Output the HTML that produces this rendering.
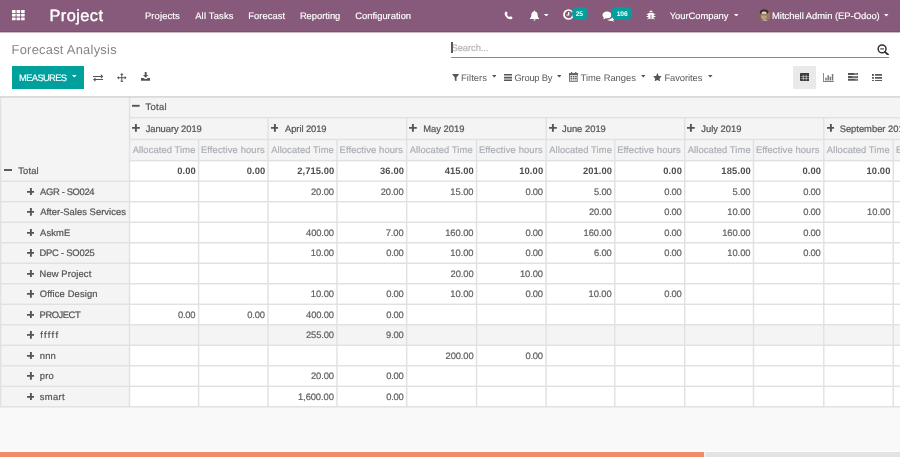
<!DOCTYPE html>
<html lang="en">
<head>
<meta charset="utf-8">
<title>Forecast Analysis - Odoo</title>
<style>
*{box-sizing:border-box;margin:0;padding:0}
html,body{width:900px;height:457px;overflow:hidden;background:#f9f9f9;font-family:"Liberation Sans",Arial,sans-serif;color:#666}
body{position:relative}
#app{left:0;top:0;width:900px;height:457px;will-change:transform;overflow:hidden}
div,svg{position:absolute}
.t,.brand,.bt,.title,.ph,.btxt,.f,.c,.n,.nb,.m{text-rendering:geometricPrecision}
.t{height:14px;line-height:14px;font-size:9.4px;white-space:nowrap;color:#fff;-webkit-text-stroke:.15px #fff}
.brand{height:22px;line-height:22px;font-size:16.4px;white-space:nowrap;color:#fff;-webkit-text-stroke:.4px #fff}
.w{fill:#fff}
.badge{height:12.2px;border-radius:6.1px;background:#00a09d}
.bt{height:12px;line-height:12px;color:#fff;font-size:6.7px;font-weight:bold;white-space:nowrap}
.cp{left:0;top:32px;width:900px;height:65px;background:#fff}
.title{height:18px;line-height:18px;font-size:12.9px;color:#858585;white-space:nowrap}
.sline{left:451px;top:56.9px;width:438px;height:1px;background:#8a8a8a}
.ph{height:14px;line-height:14px;font-size:9.4px;color:#b4b4b4;white-space:nowrap;-webkit-text-stroke:.2px #b4b4b4}
.cursor{left:451.2px;top:42px;width:1.6px;height:11.2px;background:#5a5a5a}
.btn{left:12px;top:66px;width:72px;height:23px;background:#00a09d}
.btxt{height:14px;line-height:14px;color:#fff;font-size:9.4px;white-space:nowrap;-webkit-text-stroke:.15px #fff}
.ic{fill:#555}
.ic2{fill:#333}
.f{height:14px;line-height:14px;font-size:9.4px;color:#5a5a5a;white-space:nowrap}
.vs{left:792.7px;top:65.9px;width:23.3px;height:23px;background:#e9e9e9}
.tbl{left:0;top:97px;width:900px;height:310.2px;background:#fff;overflow:hidden}
.hd{background:#f4f4f4}
.lines{fill:#dfe2e5}
.c{font-size:9.4px;line-height:14px;height:14px;white-space:nowrap;color:#555;-webkit-text-stroke:.22px #555}
.n{font-size:9.4px;line-height:14px;height:14px;white-space:nowrap;color:#606060;-webkit-text-stroke:.2px #606060}
.nb{font-size:9.4px;line-height:14px;height:14px;white-space:nowrap;color:#4f4f4f;font-weight:bold}
.m{font-size:9.4px;line-height:14px;height:14px;white-space:nowrap;color:#abafb5;-webkit-text-stroke:.2px #abafb5}
.pm{fill:#555}
.bar{left:0;top:452px;width:900px;height:5px;background:#e3e3e3}
.bar i{position:absolute;left:0;top:0;width:704px;height:5px;background:#f08b65}
.bar b{position:absolute;left:704px;top:0;width:1.5px;height:5px;background:#f3ece9}
.barl{left:0;top:451px;width:900px;height:1px;background:#fdfdfd}
</style>
</head>
<body>
<div id="app">

<div class="cp"></div>
<svg class="navbg" style="left:0;top:0;width:900px;height:34px" viewBox="0 0 900 34"><rect x="0" y="0" width="900" height="32.400" fill="#74506a"/><rect x="0" y="0" width="900" height="31.300" fill="#875a7b"/></svg>
<svg class="w" style="left:11.9px;top:9.9px;width:13px;height:11px" viewBox="0 0 13 11"><rect x="0.00" y="0.00" width="3.6" height="2.9" rx=".5"/><rect x="4.55" y="0.00" width="3.6" height="2.9" rx=".5"/><rect x="9.10" y="0.00" width="3.6" height="2.9" rx=".5"/><rect x="0.00" y="3.70" width="3.6" height="2.9" rx=".5"/><rect x="4.55" y="3.70" width="3.6" height="2.9" rx=".5"/><rect x="9.10" y="3.70" width="3.6" height="2.9" rx=".5"/><rect x="0.00" y="7.40" width="3.6" height="2.9" rx=".5"/><rect x="4.55" y="7.40" width="3.6" height="2.9" rx=".5"/><rect x="9.10" y="7.40" width="3.6" height="2.9" rx=".5"/></svg>
<div id="brand" class="brand" style="left:49.52px;top:5.00px;letter-spacing:0.408px;">Project</div>
<div id="nav0" class="t" style="left:144.91px;top:9.00px;letter-spacing:0.137px;">Projects</div>
<div id="nav1" class="t" style="left:195.16px;top:9.00px;letter-spacing:0.196px;">All Tasks</div>
<div id="nav2" class="t" style="left:248.26px;top:9.00px;letter-spacing:0.050px;">Forecast</div>
<div id="nav3" class="t" style="left:299.89px;top:9.00px;letter-spacing:-0.030px;">Reporting</div>
<div id="nav4" class="t" style="left:355.30px;top:9.00px;letter-spacing:0.000px;">Configuration</div>
<svg class="w" style="left:504px;top:11px;width:9px;height:9px" viewBox="0 0 20 20"><path d="M4.5 1.200c.5-.3 1.100-.2 1.400.3l2.100 3.400c.3.500.2 1.100-.2 1.500L6.400 7.600c1.100 2.400 3.200 4.500 5.900 5.900l1.300-1.400c.4-.4 1-.5 1.500-.2l3.400 2.100c.5.300.6.900.3 1.400-.8 1.600-2.300 3.100-4.100 3.100C8.600 18.500 1.500 11.400 1.500 5.300c0-1.800 1.400-3.300 3-4.100z"/></svg>
<svg class="w" style="left:529px;top:10.2px;width:11px;height:11px" viewBox="0 0 20 20"><path d="M10 1c.7 0 1.200.5 1.200 1.200v.5c2.700.6 4.500 2.900 4.500 5.800 0 3.500 1.100 5.400 2.600 6.600.5.400.2 1.400-.5 1.400H2.200c-.7 0-1-1-.5-1.400 1.500-1.200 2.600-3.100 2.600-6.600 0-2.900 1.800-5.200 4.500-5.800v-.5C8.800 1.500 9.300 1 10 1zM7.800 17.400h4.400c0 1.200-1 2.100-2.200 2.100s-2.200-.9-2.200-2.100z"/></svg>
<svg class="w" style="left:544.40px;top:13.90px;width:4.6px;height:2.6px" viewBox="0 0 4.6 2.6"><path d="M0 0h4.6L2.3 2.6z"/></svg>
<svg style="left:562.600px;top:9.300px;width:11px;height:11px" viewBox="0 0 11 11"><circle cx="5.500" cy="5.500" r="4.500" fill="none" stroke="#fff" stroke-width="1.700"/><path d="M5.700 2.900v3.100H3.500" fill="none" stroke="#fff" stroke-width="1.200"/></svg>
<div class="badge" style="left:572.3px;top:7.4px;width:16.2px"></div>
<div id="b25" class="bt" style="left:575.66px;top:9.00px;letter-spacing:-0.006px;">25</div>
<svg class="w" style="left:602px;top:10.5px;width:13px;height:11px" viewBox="0 0 26 22"><path d="M10 1c5 0 9 3 9 6.800s-4 6.800-9 6.800c-.9 0-1.800-.1-2.600-.3C6 15.500 4 16.300 2 16.500c.9-1 1.600-2 1.900-3.200C2.100 12 1 10 1 7.800 1 4 5 1 10 1zm11.500 8c2.100 1.200 3.500 3 3.500 5 0 1.800-1 3.400-2.700 4.500.3 1.100.9 2 1.700 2.900-1.800-.2-3.500-.9-4.800-1.800-.7.100-1.500.2-2.200.2-2.600 0-4.900-.9-6.400-2.300 5.900-.2 10.900-3.500 10.900-8.500z"/></svg>
<div class="badge" style="left:611.3px;top:7.4px;width:20.8px"></div>
<div id="b106" class="bt" style="left:616.64px;top:9.00px;letter-spacing:-0.072px;">106</div>
<svg class="w" style="left:646px;top:10.3px;width:10px;height:10px" viewBox="0 0 20 20"><path d="M6.500 4.500a3.500 3.500 0 0 1 7 0zM5.500 6h9c.6 0 1 .4 1 1v1.500l2.300-1.300.9 1.500-3.200 1.800v1.500h3.300v1.800h-3.300c0 .7-.2 1.400-.5 2l2.800 2-1.100 1.400-2.700-2c-.8.800-1.900 1.300-3.100 1.300V9.500H9.100v9c-1.200 0-2.300-.5-3.100-1.300l-2.700 2-1.100-1.400 2.800-2c-.3-.6-.5-1.300-.5-2H1.200V12h3.300v-1.500L1.300 8.700l.9-1.500 2.300 1.300V7c0-.6.400-1 1-1z"/></svg>
<div id="company" class="t" style="left:669.66px;top:9.00px;letter-spacing:-0.022px;">YourCompany</div>
<svg class="w" style="left:733.90px;top:13.90px;width:4.6px;height:2.6px" viewBox="0 0 4.6 2.6"><path d="M0 0h4.6L2.3 2.6z"/></svg>
<svg style="left:757.6px;top:8.7px;width:12.600px;height:12.600px" viewBox="0 0 13 13"><defs><clipPath id="av"><circle cx="6.5" cy="6.5" r="6.300"/></clipPath><filter id="avb" x="-20%" y="-20%" width="140%" height="140%"><feGaussianBlur stdDeviation=".55"/></filter></defs><g clip-path="url(#av)"><g filter="url(#avb)"><rect x="-3" y="-3" width="19" height="19" fill="#94805a"/><rect x="-3" y="-3" width="7" height="19" fill="#7d6c50"/><ellipse cx="6.3" cy="2.6" rx="4.6" ry="3" fill="#3d2f2c"/><ellipse cx="6.3" cy="4.3" rx="2.7" ry="1.6" fill="#e4dcd6"/><ellipse cx="6" cy="7.6" rx="2.900" ry="3.200" fill="#c99883"/><rect x="3.6" y="5.600" width="5.400" height="1" fill="#6b5148" opacity=".7"/><path d="M6.500 10.500l3 1 1.500 2h-6z" fill="#aab0bd"/></g></g></svg>
<div id="user" class="t" style="left:772.03px;top:9.00px;letter-spacing:-0.006px;">Mitchell Admin (EP-Odoo)</div>
<svg class="w" style="left:884.40px;top:14.00px;width:4.6px;height:2.6px" viewBox="0 0 4.6 2.6"><path d="M0 0h4.6L2.3 2.6z"/></svg>
<div id="title" class="title" style="left:11.54px;top:41.00px;letter-spacing:0.253px;">Forecast Analysis</div>
<div class="sline"></div>
<div id="ph" class="ph" style="left:451.56px;top:41.00px;letter-spacing:-0.071px;">Search...</div>
<div class="cursor"></div>
<svg style="left:877.4px;top:43.9px;width:12px;height:11.5px" viewBox="0 0 12 11.500"><circle cx="5.100" cy="4.900" r="3.900" fill="none" stroke="#333" stroke-width="1.500"/><path d="M7.900 7.900l3.200 2.900" stroke="#333" stroke-width="1.900" stroke-linecap="round"/><path d="M3.200 4.900h3.800" stroke="#333" stroke-width="1.100"/></svg>
<div class="btn"></div>
<div id="measures" class="btxt" style="left:19.06px;top:71.00px;letter-spacing:-0.659px;">MEASURES</div>
<svg class="w" style="left:72.10px;top:75.20px;width:4.6px;height:2.6px" viewBox="0 0 4.6 2.6"><path d="M0 0h4.6L2.3 2.6z"/></svg>
<svg class="ic" style="left:92.9px;top:73.600px;width:10.400px;height:8px" viewBox="0 0 10.400 8"><path d="M0 1.900h7.900V.3l2.500 2.100-2.500 2.100V3H0zM10.400 5h-7.900V3.500L0 5.600l2.500 2.100V6.100h7.900z"/></svg>
<svg class="ic" style="left:117.1px;top:72.600px;width:9.600px;height:9.600px" viewBox="0 0 9.600 9.600"><path d="M4.800 0l1.700 1.900H5.300v2.400h2.400V3.100l1.900 1.700-1.900 1.700V5.300H5.300v2.400h1.200L4.800 9.600 3.100 7.700h1.200V5.300H1.900v1.200L0 4.800l1.900-1.700v1.200h2.400V1.900H3.100z"/></svg>
<svg class="ic" style="left:140.700px;top:72.400px;width:9.300px;height:8.800px" viewBox="0 0 9.300 8.800"><path d="M3.700 0h1.900v3h1.700L4.650 5.800 2 3h1.700zM0 5.900h2.600l1.300 1.200h1.500l1.300-1.200h2.600v2.900H0z"/></svg>
<svg class="ic" style="left:451.700px;top:73.800px;width:7.300px;height:7.600px" viewBox="0 0 7.300 7.600"><path d="M0 0h7.300L4.500 3.400v4.200L2.800 6.300V3.400z"/></svg>
<div id="f0" class="f" style="left:461.10px;top:71.00px;letter-spacing:0.047px;">Filters</div>
<svg class="ic" style="left:491.60px;top:75.00px;width:4.6px;height:2.6px" viewBox="0 0 4.6 2.6"><path d="M0 0h4.6L2.3 2.6z"/></svg>
<svg class="ic" style="left:504px;top:73.800px;width:8.400px;height:7.200px" viewBox="0 0 8.400 7.200"><path d="M0 0h8.400v1.600H0zM0 2.800h8.400v1.600H0zM0 5.600h8.400v1.600H0z"/></svg>
<div id="f1" class="f" style="left:514.56px;top:71.00px;letter-spacing:-0.254px;">Group By</div>
<svg class="ic" style="left:556.90px;top:75.00px;width:4.6px;height:2.6px" viewBox="0 0 4.6 2.6"><path d="M0 0h4.6L2.3 2.6z"/></svg>
<svg class="ic" style="left:569px;top:72.400px;width:9.300px;height:9.800px" viewBox="0 0 9.300 9.800"><path fill-rule="evenodd" d="M1.900 0h1.300v1.100h2.900V0h1.300v1.100h1.900v8.700H0V1.100h1.900zM.9 3.300v5.600h7.500V3.300zM1.500 3.900h1.700v1.300H1.500zM3.800 3.900h1.700v1.300H3.800zM6.100 3.900h1.700v1.300H6.100zM1.500 5.700h1.700V7H1.500zM3.800 5.700h1.700V7H3.800zM6.100 5.700h1.700V7H6.100zM1.500 7.400h1.700v1H1.500zM3.800 7.400h1.700v1H3.800zM6.100 7.400h1.700v1H6.100z" opacity=".9"/></svg>
<div id="f2" class="f" style="left:580.54px;top:71.00px;letter-spacing:0.002px;">Time Ranges</div>
<svg class="ic" style="left:640.60px;top:75.00px;width:4.6px;height:2.6px" viewBox="0 0 4.6 2.6"><path d="M0 0h4.6L2.3 2.6z"/></svg>
<svg class="ic" style="left:653.300px;top:73px;width:8.800px;height:8.400px" viewBox="0 0 8.800 8.400"><path d="M4.400 0l1.350 2.900 3.050.4-2.250 2.100.6 3L4.400 6.900 1.650 8.400l.6-3L0 3.300l3.050-.4z"/></svg>
<div id="f3" class="f" style="left:664.38px;top:71.00px;letter-spacing:-0.058px;">Favorites</div>
<svg class="ic" style="left:708.10px;top:75.00px;width:4.6px;height:2.6px" viewBox="0 0 4.6 2.6"><path d="M0 0h4.6L2.3 2.6z"/></svg>
<div class="vs"></div>
<svg style="left:799.6px;top:73px;width:9.5px;height:8px" viewBox="0 0 9.500 8"><rect x="0" y="0" width="9.500" height="8" rx=".9" fill="#3a3a3a"/><path d="M3.300 1.700v5.600M6.200 1.700v5.600" stroke="#e9e9e9" stroke-width=".65" fill="none"/><path d="M.8 3.500h7.900M.8 5.500h7.900" stroke="#e9e9e9" stroke-width=".55" fill="none" opacity=".85"/></svg>
<svg class="ic" style="left:822.600px;top:73px;width:11.600px;height:9px" viewBox="0 0 11.600 9"><path d="M0 0h.9v8.100h10.700V9H0z" opacity=".75"/><path d="M2.200 4.800h1.500v2.700H2.200zM4.400 2.200h1.500v5.300H4.400zM6.600 3.700h1.500v3.800H6.600zM8.800 1h1.500v6.500H8.800z" opacity=".8"/></svg>
<svg class="ic" style="left:847.900px;top:73.100px;width:10.200px;height:7.800px" viewBox="0 0 10.200 7.800"><path d="M0 0h10.200v2H0zM0 2.900h10.200v2H0zM0 5.800h10.200v2H0z"/><path d="M6.200.6h3.300v.8H6.200zM4.200 3.500h5.300v.8H4.200zM7.200 6.400h2.300v.8H7.200z" fill="#fff" opacity=".6"/></svg>
<svg style="left:871.9px;top:73.600px;width:10.200px;height:7.800px" viewBox="0 0 10.200 7.800" fill="#5a5a5a"><path d="M0 0h1.900v1.900H0zM3 .1h7.200v1.700H3zM0 2.950h1.900v1.900H0zM3 3.050h7.200v1.700H3zM0 5.900h1.900v1.900H0zM3 6h7.200v1.700H3z"/></svg>
<div class="tbl"></div>
<div class="hd" style="left:0;top:97.0px;width:129.5px;height:309.82px"></div>
<div class="hd" style="left:0;top:97.0px;width:900px;height:63.70px"></div>
<div class="hd" style="left:0;top:324.78px;width:900px;height:20.51px"></div>
<svg class="lines" style="left:0;top:0;width:900px;height:457px" viewBox="0 0 900 457">
<rect x="129.50" y="116.98" width="770.50" height="1.45"/>
<rect x="129.50" y="138.72" width="770.50" height="1.45"/>
<rect x="129.50" y="159.97" width="770.50" height="1.45"/>
<rect x="0.00" y="180.48" width="900.00" height="1.45"/>
<rect x="0.00" y="201.00" width="900.00" height="1.45"/>
<rect x="0.00" y="221.50" width="900.00" height="1.45"/>
<rect x="0.00" y="242.02" width="900.00" height="1.45"/>
<rect x="0.00" y="262.52" width="900.00" height="1.45"/>
<rect x="0.00" y="283.03" width="900.00" height="1.45"/>
<rect x="0.00" y="303.54" width="900.00" height="1.45"/>
<rect x="0.00" y="324.05" width="900.00" height="1.45"/>
<rect x="0.00" y="344.56" width="900.00" height="1.45"/>
<rect x="0.00" y="365.07" width="900.00" height="1.45"/>
<rect x="0.00" y="385.58" width="900.00" height="1.45"/>
<rect x="0.00" y="406.09" width="900.00" height="1.45"/>
<rect x="-0.12" y="97.00" width="1.45" height="310.32"/>
<rect x="128.78" y="97.00" width="1.45" height="310.32"/>
<rect x="197.88" y="139.45" width="1.45" height="267.87"/>
<rect x="267.27" y="117.70" width="1.45" height="289.62"/>
<rect x="336.27" y="139.45" width="1.45" height="267.87"/>
<rect x="405.97" y="117.70" width="1.45" height="289.62"/>
<rect x="475.88" y="139.45" width="1.45" height="267.87"/>
<rect x="545.38" y="117.70" width="1.45" height="289.62"/>
<rect x="614.07" y="139.45" width="1.45" height="267.87"/>
<rect x="683.98" y="117.70" width="1.45" height="289.62"/>
<rect x="752.77" y="139.45" width="1.45" height="267.87"/>
<rect x="823.07" y="117.70" width="1.45" height="289.62"/>
<rect x="892.57" y="139.45" width="1.45" height="267.87"/>
</svg>
<svg class="pm" style="left:131.95px;top:102.40px;width:7.6px;height:7.6px" viewBox="0 0 7.6 7.6"><path d="M0 2.8499999999999996h7.6v1.9h-7.6z"/></svg>
<div id="htotal" class="c" style="left:145.41px;top:100.00px;letter-spacing:0.326px;">Total</div>
<svg class="pm" style="left:132.20px;top:124.20px;width:7.8px;height:7.8px" viewBox="0 0 7.8 7.8"><path d="M2.95 0h1.9v2.95h2.95v1.9h-2.95v2.95h-1.9v-2.95h-2.95v-1.9h2.95z"/></svg>
<div id="mon0" class="c" style="left:145.65px;top:122.00px;letter-spacing:-0.060px;">January 2019</div>
<svg class="pm" style="left:270.70px;top:124.20px;width:7.8px;height:7.8px" viewBox="0 0 7.8 7.8"><path d="M2.95 0h1.9v2.95h2.95v1.9h-2.95v2.95h-1.9v-2.95h-2.95v-1.9h2.95z"/></svg>
<div id="mon1" class="c" style="left:285.05px;top:122.00px;letter-spacing:-0.079px;">April 2019</div>
<svg class="pm" style="left:409.40px;top:124.20px;width:7.8px;height:7.8px" viewBox="0 0 7.8 7.8"><path d="M2.95 0h1.9v2.95h2.95v1.9h-2.95v2.95h-1.9v-2.95h-2.95v-1.9h2.95z"/></svg>
<div id="mon2" class="c" style="left:423.23px;top:122.00px;letter-spacing:0.009px;">May 2019</div>
<svg class="pm" style="left:548.80px;top:124.20px;width:7.8px;height:7.8px" viewBox="0 0 7.8 7.8"><path d="M2.95 0h1.9v2.95h2.95v1.9h-2.95v2.95h-1.9v-2.95h-2.95v-1.9h2.95z"/></svg>
<div id="mon3" class="c" style="left:561.99px;top:122.00px;letter-spacing:0.006px;">June 2019</div>
<svg class="pm" style="left:687.40px;top:124.20px;width:7.8px;height:7.8px" viewBox="0 0 7.8 7.8"><path d="M2.95 0h1.9v2.95h2.95v1.9h-2.95v2.95h-1.9v-2.95h-2.95v-1.9h2.95z"/></svg>
<div id="mon4" class="c" style="left:701.30px;top:122.00px;letter-spacing:0.000px;">July 2019</div>
<svg class="pm" style="left:826.50px;top:124.20px;width:7.8px;height:7.8px" viewBox="0 0 7.8 7.8"><path d="M2.95 0h1.9v2.95h2.95v1.9h-2.95v2.95h-1.9v-2.95h-2.95v-1.9h2.95z"/></svg>
<div id="mon5" class="c" style="left:839.63px;top:122.00px;letter-spacing:0.000px;">September 2019</div>
<div id="ms0" class="m" style="left:132.67px;top:143.00px;letter-spacing:0.095px;">Allocated Time</div>
<div id="ms1" class="m" style="left:200.93px;top:143.00px;letter-spacing:0.132px;">Effective hours</div>
<div id="ms2" class="m" style="left:271.14px;top:143.00px;letter-spacing:0.091px;">Allocated Time</div>
<div id="ms3" class="m" style="left:339.60px;top:143.00px;letter-spacing:0.113px;">Effective hours</div>
<div id="ms4" class="m" style="left:409.73px;top:143.00px;letter-spacing:0.111px;">Allocated Time</div>
<div id="ms5" class="m" style="left:478.93px;top:143.00px;letter-spacing:0.132px;">Effective hours</div>
<div id="ms6" class="m" style="left:549.24px;top:143.00px;letter-spacing:0.087px;">Allocated Time</div>
<div id="ms7" class="m" style="left:617.18px;top:143.00px;letter-spacing:0.126px;">Effective hours</div>
<div id="ms8" class="m" style="left:687.73px;top:143.00px;letter-spacing:0.111px;">Allocated Time</div>
<div id="ms9" class="m" style="left:755.89px;top:143.00px;letter-spacing:0.117px;">Effective hours</div>
<div id="ms10" class="m" style="left:826.85px;top:143.00px;letter-spacing:0.100px;">Allocated Time</div>
<div id="ms11" class="m" style="left:896.05px;top:143.00px;letter-spacing:0.000px;">Effective hours</div>
<svg class="pm" style="left:4.10px;top:166.10px;width:8.0px;height:8.0px" viewBox="0 0 8.0 8.0"><path d="M0 3.05h8.0v1.9h-8.0z"/></svg>
<div id="row0" class="c" style="left:18.22px;top:164.00px;letter-spacing:0.171px;">Total</div>
<div id="v0_0" class="nb" style="left:177.20px;top:164.00px;letter-spacing:0.062px;">0.00</div>
<div id="v0_1" class="nb" style="left:246.66px;top:164.00px;letter-spacing:0.084px;">0.00</div>
<div id="v0_2" class="nb" style="left:297.35px;top:164.00px;letter-spacing:0.049px;">2,715.00</div>
<div id="v0_3" class="nb" style="left:380.03px;top:164.00px;letter-spacing:0.118px;">36.00</div>
<div id="v0_4" class="nb" style="left:444.76px;top:164.00px;letter-spacing:0.042px;">415.00</div>
<div id="v0_5" class="nb" style="left:519.19px;top:164.00px;letter-spacing:0.125px;">10.00</div>
<div id="v0_6" class="nb" style="left:583.01px;top:164.00px;letter-spacing:0.034px;">201.00</div>
<div id="v0_7" class="nb" style="left:663.24px;top:164.00px;letter-spacing:0.136px;">0.00</div>
<div id="v0_8" class="nb" style="left:721.37px;top:164.00px;letter-spacing:0.147px;">185.00</div>
<div id="v0_9" class="nb" style="left:802.41px;top:164.00px;letter-spacing:0.122px;">0.00</div>
<div id="v0_10" class="nb" style="left:866.46px;top:164.00px;letter-spacing:0.125px;">10.00</div>
<svg class="pm" style="left:26.70px;top:187.56px;width:7.8px;height:7.8px" viewBox="0 0 7.8 7.8"><path d="M2.95 0h1.9v2.95h2.95v1.9h-2.95v2.95h-1.9v-2.95h-2.95v-1.9h2.95z"/></svg>
<div id="row1" class="c" style="left:40.11px;top:185.00px;letter-spacing:-0.344px;">AGR - SO024</div>
<div id="v1_2" class="n" style="left:310.97px;top:185.00px;letter-spacing:-0.112px;">20.00</div>
<div id="v1_3" class="n" style="left:380.82px;top:185.00px;letter-spacing:-0.167px;">20.00</div>
<div id="v1_4" class="n" style="left:450.36px;top:185.00px;letter-spacing:-0.060px;">15.00</div>
<div id="v1_5" class="n" style="left:525.51px;top:185.00px;letter-spacing:-0.240px;">0.00</div>
<div id="v1_6" class="n" style="left:593.94px;top:185.00px;letter-spacing:-0.135px;">5.00</div>
<div id="v1_7" class="n" style="left:664.16px;top:185.00px;letter-spacing:-0.204px;">0.00</div>
<div id="v1_8" class="n" style="left:732.58px;top:185.00px;letter-spacing:-0.120px;">5.00</div>
<div id="v1_9" class="n" style="left:803.17px;top:185.00px;letter-spacing:-0.218px;">0.00</div>
<svg class="pm" style="left:26.70px;top:208.07px;width:7.8px;height:7.8px" viewBox="0 0 7.8 7.8"><path d="M2.95 0h1.9v2.95h2.95v1.9h-2.95v2.95h-1.9v-2.95h-2.95v-1.9h2.95z"/></svg>
<div id="row2" class="c" style="left:40.16px;top:205.00px;letter-spacing:0.039px;">After-Sales Services</div>
<div id="v2_6" class="n" style="left:589.05px;top:205.00px;letter-spacing:-0.211px;">20.00</div>
<div id="v2_7" class="n" style="left:664.16px;top:205.00px;letter-spacing:-0.204px;">0.00</div>
<div id="v2_8" class="n" style="left:727.33px;top:205.00px;letter-spacing:-0.075px;">10.00</div>
<div id="v2_9" class="n" style="left:803.17px;top:205.00px;letter-spacing:-0.218px;">0.00</div>
<div id="v2_10" class="n" style="left:867.09px;top:205.00px;letter-spacing:-0.041px;">10.00</div>
<svg class="pm" style="left:26.70px;top:228.59px;width:7.8px;height:7.8px" viewBox="0 0 7.8 7.8"><path d="M2.95 0h1.9v2.95h2.95v1.9h-2.95v2.95h-1.9v-2.95h-2.95v-1.9h2.95z"/></svg>
<div id="row3" class="c" style="left:40.10px;top:226.00px;letter-spacing:0.108px;">AskmE</div>
<div id="v3_2" class="n" style="left:306.10px;top:226.00px;letter-spacing:-0.149px;">400.00</div>
<div id="v3_3" class="n" style="left:385.71px;top:226.00px;letter-spacing:-0.092px;">7.00</div>
<div id="v3_4" class="n" style="left:445.18px;top:226.00px;letter-spacing:-0.060px;">160.00</div>
<div id="v3_5" class="n" style="left:525.51px;top:226.00px;letter-spacing:-0.240px;">0.00</div>
<div id="v3_6" class="n" style="left:583.62px;top:226.00px;letter-spacing:-0.123px;">160.00</div>
<div id="v3_7" class="n" style="left:664.16px;top:226.00px;letter-spacing:-0.204px;">0.00</div>
<div id="v3_8" class="n" style="left:722.24px;top:226.00px;letter-spacing:-0.083px;">160.00</div>
<div id="v3_9" class="n" style="left:803.17px;top:226.00px;letter-spacing:-0.218px;">0.00</div>
<svg class="pm" style="left:26.70px;top:249.09px;width:7.8px;height:7.8px" viewBox="0 0 7.8 7.8"><path d="M2.95 0h1.9v2.95h2.95v1.9h-2.95v2.95h-1.9v-2.95h-2.95v-1.9h2.95z"/></svg>
<div id="row4" class="c" style="left:39.54px;top:246.00px;letter-spacing:-0.223px;">DPC - SO025</div>
<div id="v4_2" class="n" style="left:310.75px;top:246.00px;letter-spacing:-0.036px;">10.00</div>
<div id="v4_3" class="n" style="left:386.16px;top:246.00px;letter-spacing:-0.204px;">0.00</div>
<div id="v4_4" class="n" style="left:450.36px;top:246.00px;letter-spacing:-0.060px;">10.00</div>
<div id="v4_5" class="n" style="left:525.51px;top:246.00px;letter-spacing:-0.240px;">0.00</div>
<div id="v4_6" class="n" style="left:593.96px;top:246.00px;letter-spacing:-0.149px;">6.00</div>
<div id="v4_7" class="n" style="left:664.16px;top:246.00px;letter-spacing:-0.204px;">0.00</div>
<div id="v4_8" class="n" style="left:727.33px;top:246.00px;letter-spacing:-0.075px;">10.00</div>
<div id="v4_9" class="n" style="left:803.17px;top:246.00px;letter-spacing:-0.218px;">0.00</div>
<svg class="pm" style="left:26.70px;top:269.61px;width:7.8px;height:7.8px" viewBox="0 0 7.8 7.8"><path d="M2.95 0h1.9v2.95h2.95v1.9h-2.95v2.95h-1.9v-2.95h-2.95v-1.9h2.95z"/></svg>
<div id="row5" class="c" style="left:39.53px;top:267.00px;letter-spacing:0.123px;">New Project</div>
<div id="v5_4" class="n" style="left:450.62px;top:267.00px;letter-spacing:-0.094px;">20.00</div>
<div id="v5_5" class="n" style="left:519.99px;top:267.00px;letter-spacing:-0.097px;">10.00</div>
<svg class="pm" style="left:26.70px;top:290.12px;width:7.8px;height:7.8px" viewBox="0 0 7.8 7.8"><path d="M2.95 0h1.9v2.95h2.95v1.9h-2.95v2.95h-1.9v-2.95h-2.95v-1.9h2.95z"/></svg>
<div id="row6" class="c" style="left:39.84px;top:287.00px;letter-spacing:0.129px;">Office Design</div>
<div id="v6_2" class="n" style="left:310.75px;top:287.00px;letter-spacing:-0.036px;">10.00</div>
<div id="v6_3" class="n" style="left:386.16px;top:287.00px;letter-spacing:-0.204px;">0.00</div>
<div id="v6_4" class="n" style="left:450.36px;top:287.00px;letter-spacing:-0.060px;">10.00</div>
<div id="v6_5" class="n" style="left:525.51px;top:287.00px;letter-spacing:-0.240px;">0.00</div>
<div id="v6_6" class="n" style="left:588.57px;top:287.00px;letter-spacing:-0.088px;">10.00</div>
<div id="v6_7" class="n" style="left:664.16px;top:287.00px;letter-spacing:-0.204px;">0.00</div>
<svg class="pm" style="left:26.70px;top:310.62px;width:7.8px;height:7.8px" viewBox="0 0 7.8 7.8"><path d="M2.95 0h1.9v2.95h2.95v1.9h-2.95v2.95h-1.9v-2.95h-2.95v-1.9h2.95z"/></svg>
<div id="row7" class="c" style="left:39.58px;top:308.00px;letter-spacing:-0.452px;">PROJECT</div>
<div id="v7_0" class="n" style="left:177.98px;top:308.00px;letter-spacing:-0.215px;">0.00</div>
<div id="v7_1" class="n" style="left:247.24px;top:308.00px;letter-spacing:-0.171px;">0.00</div>
<div id="v7_2" class="n" style="left:306.10px;top:308.00px;letter-spacing:-0.149px;">400.00</div>
<div id="v7_3" class="n" style="left:386.16px;top:308.00px;letter-spacing:-0.204px;">0.00</div>
<svg class="pm" style="left:26.70px;top:331.13px;width:7.8px;height:7.8px" viewBox="0 0 7.8 7.8"><path d="M2.95 0h1.9v2.95h2.95v1.9h-2.95v2.95h-1.9v-2.95h-2.95v-1.9h2.95z"/></svg>
<div id="row8" class="c" style="left:40.16px;top:328.00px;letter-spacing:1.375px;">fffff</div>
<div id="v8_2" class="n" style="left:305.95px;top:328.00px;letter-spacing:-0.117px;">255.00</div>
<div id="v8_3" class="n" style="left:386.11px;top:328.00px;letter-spacing:-0.186px;">9.00</div>
<svg class="pm" style="left:26.70px;top:351.64px;width:7.8px;height:7.8px" viewBox="0 0 7.8 7.8"><path d="M2.95 0h1.9v2.95h2.95v1.9h-2.95v2.95h-1.9v-2.95h-2.95v-1.9h2.95z"/></svg>
<div id="row9" class="c" style="left:39.76px;top:349.00px;letter-spacing:0.186px;">nnn</div>
<div id="v9_4" class="n" style="left:445.57px;top:349.00px;letter-spacing:-0.114px;">200.00</div>
<div id="v9_5" class="n" style="left:525.51px;top:349.00px;letter-spacing:-0.240px;">0.00</div>
<svg class="pm" style="left:26.70px;top:372.16px;width:7.8px;height:7.8px" viewBox="0 0 7.8 7.8"><path d="M2.95 0h1.9v2.95h2.95v1.9h-2.95v2.95h-1.9v-2.95h-2.95v-1.9h2.95z"/></svg>
<div id="row10" class="c" style="left:39.80px;top:369.00px;letter-spacing:0.199px;">pro</div>
<div id="v10_2" class="n" style="left:310.97px;top:369.00px;letter-spacing:-0.112px;">20.00</div>
<div id="v10_3" class="n" style="left:386.16px;top:369.00px;letter-spacing:-0.204px;">0.00</div>
<svg class="pm" style="left:26.70px;top:392.67px;width:7.8px;height:7.8px" viewBox="0 0 7.8 7.8"><path d="M2.95 0h1.9v2.95h2.95v1.9h-2.95v2.95h-1.9v-2.95h-2.95v-1.9h2.95z"/></svg>
<div id="row11" class="c" style="left:39.80px;top:390.00px;letter-spacing:0.336px;">smart</div>
<div id="v11_2" class="n" style="left:298.01px;top:390.00px;letter-spacing:-0.093px;">1,600.00</div>
<div id="v11_3" class="n" style="left:386.16px;top:390.00px;letter-spacing:-0.204px;">0.00</div>
<svg style="left:0;top:95px;width:900px;height:4px" viewBox="0 0 900 4"><rect x="0" y="1.200" width="900" height="1.400" fill="#d1d1d1"/></svg>
<div class="barl"></div><div class="bar"><i></i><b></b></div>
</div>
</body></html>
